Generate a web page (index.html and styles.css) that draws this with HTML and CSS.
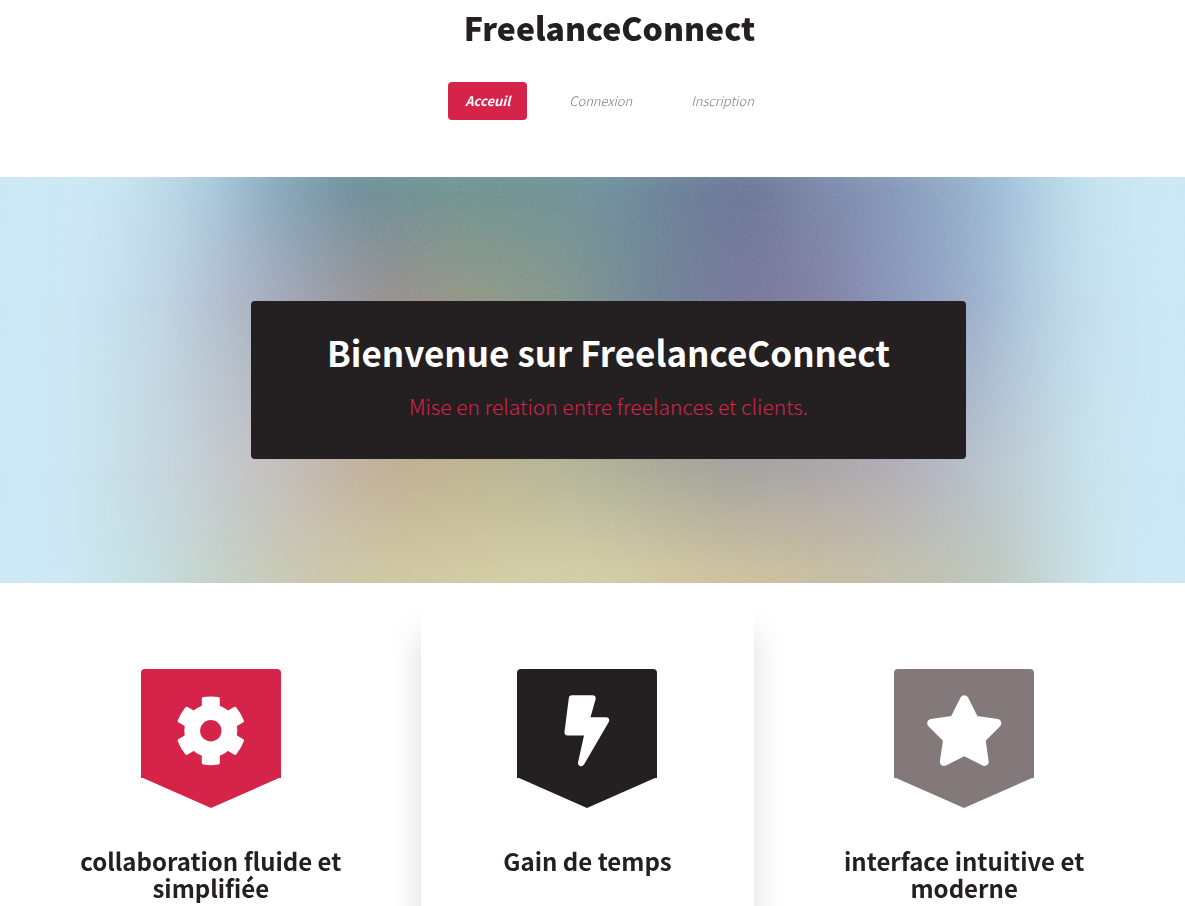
FILE: index.html
```html
<!DOCTYPE html>
<html lang="fr">
<head>
<meta charset="utf-8">
<meta name="viewport" content="width=device-width, initial-scale=1">
<title>FreelanceConnect</title>
<link rel="stylesheet" href="styles.css">
</head>
<body>
<header class="header">
  <h1 class="logo">FreelanceConnect</h1>
  <nav class="nav">
    <a class="nav-link current" href="#">Acceuil</a>
    <a class="nav-link" href="#connexion">Connexion</a>
    <a class="nav-link" href="#inscription">Inscription</a>
  </nav>
</header>

<section class="hero">
  <span class="wash wash-top"></span>
  <span class="wash wash-upper"></span>
  <span class="wash wash-lower"></span>
  <span class="wash wash-bottom"></span>
  <svg class="grain" aria-hidden="true">
    <filter id="noise" x="0" y="0" width="100%" height="100%"><feTurbulence type="fractalNoise" baseFrequency="0.35" numOctaves="2"/><feColorMatrix values="1 0 0 0 0 1 0 0 0 0 1 0 0 0 0 0 0 0 0 1"/></filter>
    <rect width="100%" height="100%" filter="url(#noise)"/>
  </svg>
  <div class="hero-box">
    <h2 class="hero-title">Bienvenue sur FreelanceConnect</h2>
    <p class="hero-text">Mise en relation entre freelances et clients.</p>
  </div>
</section>

<section class="features">
  <article class="feature">
    <svg class="ribbon red" viewBox="0 0 140 139" aria-hidden="true">
      <path d="M0 109V4Q0 0 4 0H136Q140 0 140 4V109H138L70 139L2 109Z"/>
      <g fill="#fff" transform="translate(69.8 61.8)">
        <circle r="26.5"/>
        <g id="teeth">
          <path d="M-9 -22V-32Q-9 -33.5 -7.5 -33.8Q0 -35 7.5 -33.8Q9 -33.5 9 -32V-22Z"/>
          <path d="M-9 22V32Q-9 33.5 -7.5 33.8Q0 35 7.5 33.8Q9 33.5 9 32V22Z"/>
        </g>
        <use href="#teeth" transform="rotate(60)"/>
        <use href="#teeth" transform="rotate(120)"/>
      </g>
      <circle cx="69.8" cy="61.8" r="10.7"/>
    </svg>
    <h3 class="feature-title">collaboration fluide et simplifiée</h3>
  </article>
  <article class="feature raised">
    <svg class="ribbon dark" viewBox="0 0 140 139" aria-hidden="true">
      <path d="M0 109V4Q0 0 4 0H136Q140 0 140 4V109H138L70 139L2 109Z"/>
      <path fill="#fff" stroke="#fff" stroke-width="6.4" stroke-linejoin="round" d="M55 29.5H75.5L69.3 51.5H89L64.2 94L71 63.2H50.7Z"/>
    </svg>
    <h3 class="feature-title">Gain de temps</h3>
  </article>
  <article class="feature">
    <svg class="ribbon grey" viewBox="0 0 140 139" aria-hidden="true">
      <path d="M0 109V4Q0 0 4 0H136Q140 0 140 4V109H138L70 139L2 109Z"/>
      <path fill="#fff" stroke="#fff" stroke-width="8.4" stroke-linejoin="round" d="M70.3 30.5L80.6 51L103.2 54.2L87.2 70.2L90.5 92.8L70.3 82.4L50.1 92.8L53.4 70.2L37.4 54.2L60 51Z"/>
    </svg>
    <h3 class="feature-title">interface intuitive et moderne</h3>
  </article>
</section>
</body>
</html>
```

FILE: styles.css
```css
* { box-sizing: border-box; }

body {
  margin: 0;
  min-height: 100vh;
  display: flex;
  flex-direction: column;
  background: #fff;
  color: #242021;
  font-family: "Source Sans Pro", "Noto Sans CJK SC", "Open Sans", sans-serif;
}

h1, h2, h3, p { margin: 0; }

.header {
  display: flex;
  flex-direction: column;
  align-items: center;
  gap: 28px;
  padding: 0 0 57px 34px;
}

.logo {
  font-size: 32px;
  font-weight: 900;
  line-height: 54px;
}

.nav {
  display: flex;
  gap: 25px;
}

.nav-link {
  padding: 0 17px;
  border-radius: 4px;
  color: #7d7678;
  font-size: 13px;
  font-style: italic;
  font-weight: 300;
  line-height: 38px;
  text-decoration: none;
}

.nav-link.current {
  background: #d62349;
  color: #fff;
  font-weight: 700;
}

/* The hero backdrop is four horizontal colour ramps cross-faded downwards. */
.hero {
  position: relative;
  overflow: hidden;
  padding: 124px 16px 124px 48px;
  background: #cce8f4;
}

.wash {
  position: absolute;
  inset: -30px 0;
  filter: blur(20px);
}

.wash-top {
  background: linear-gradient(90deg, #cce8f4 4%, #c9e7f2 9%, #bfdcea 13%, #a9c8dc 18%, #88a8bc 23%, #6d8c98 30%, #6f9292 37%, #6e9292 44%, #6f8f9c 51%, #6b7f97 57%, #6b7495 63%, #7a86a8 69%, #8598b8 76%, #95b0cd 82%, #a6c5dd 86%, #bcdbea 90%, #c8e6f2 94%, #cce8f4 97%);
}

.wash-upper {
  background: linear-gradient(90deg, #cce8f4 5%, #c8e2ef 9%, #bfd4e2 14%, #aebbcc 19%, #9a9fae 26%, #948e8c 33%, #8f9784 40%, #83968c 47%, #6f8494 55%, #757799 62%, #7e7b9e 68%, #8794b8 75%, #98acca 82%, #b1cbdf 87%, #c4e0ed 92%, #cce8f4 97%);
  -webkit-mask-image: linear-gradient(transparent 8%, #000 32%);
  mask-image: linear-gradient(transparent 8%, #000 32%);
}

.wash-lower {
  background: linear-gradient(90deg, #cce8f4 5%, #c5d8e0 13%, #c3c8cc 19%, #c3b8b0 26%, #c0ae92 33%, #bfb490 39%, #b5b696 47%, #a9ab98 55%, #a3a39c 61%, #a9a4a5 68%, #b0abb3 75%, #b4bcc6 81%, #bfd0d8 87%, #c8e2ed 92%, #cce8f4 97%);
  -webkit-mask-image: linear-gradient(transparent 32%, #000 69%);
  mask-image: linear-gradient(transparent 32%, #000 69%);
}

.wash-bottom {
  background: linear-gradient(90deg, #cce8f4 5%, #c5dfe2 12%, #c3cfc6 19%, #cac6ac 26%, #cfc79f 34%, #d3cda4 44%, #d3cda4 51%, #cfc39d 59%, #c8bd9e 68%, #c0bfab 76%, #bcc6bc 84%, #c4d9dc 89%, #cbe7f1 94%, #cce8f4 97%);
  -webkit-mask-image: linear-gradient(transparent 69%, #000 92%);
  mask-image: linear-gradient(transparent 69%, #000 92%);
}

.grain {
  position: absolute;
  inset: 0 5%;
  width: 90%;
  height: 100%;
  opacity: 0.06;
  mix-blend-mode: overlay;
}

.hero-box {
  position: relative;
  max-width: 715px;
  margin: 0 auto;
  padding: 26px 24px 35px;
  border-radius: 4px;
  background: #242021;
  text-align: center;
}

.hero-title {
  color: #fff;
  font-size: 35px;
  font-weight: 700;
  line-height: 50px;
}

.hero-text {
  margin-top: 11px;
  color: #d62349;
  font-size: 21px;
  font-weight: 300;
  line-height: 36px;
}

.features {
  flex: 1;
  display: grid;
  grid-template-columns: repeat(3, 1fr);
  gap: 43px;
  padding: 0 54px 0 44px;
  overflow: hidden;
}

.feature {
  display: flex;
  flex-direction: column;
  align-items: center;
  gap: 39px;
  padding: 86px 24px 0;
  text-align: center;
}

.raised {
  box-shadow: 0 50px 32px rgba(0, 0, 0, 0.14);
  background: #fff;
}

.ribbon { width: 140px; }
.red { fill: #d62349; }
.dark { fill: #242021; }
.grey { fill: #83797b; }

.feature-title {
  font-size: 24px;
  font-weight: 700;
  line-height: 27px;
}
```
